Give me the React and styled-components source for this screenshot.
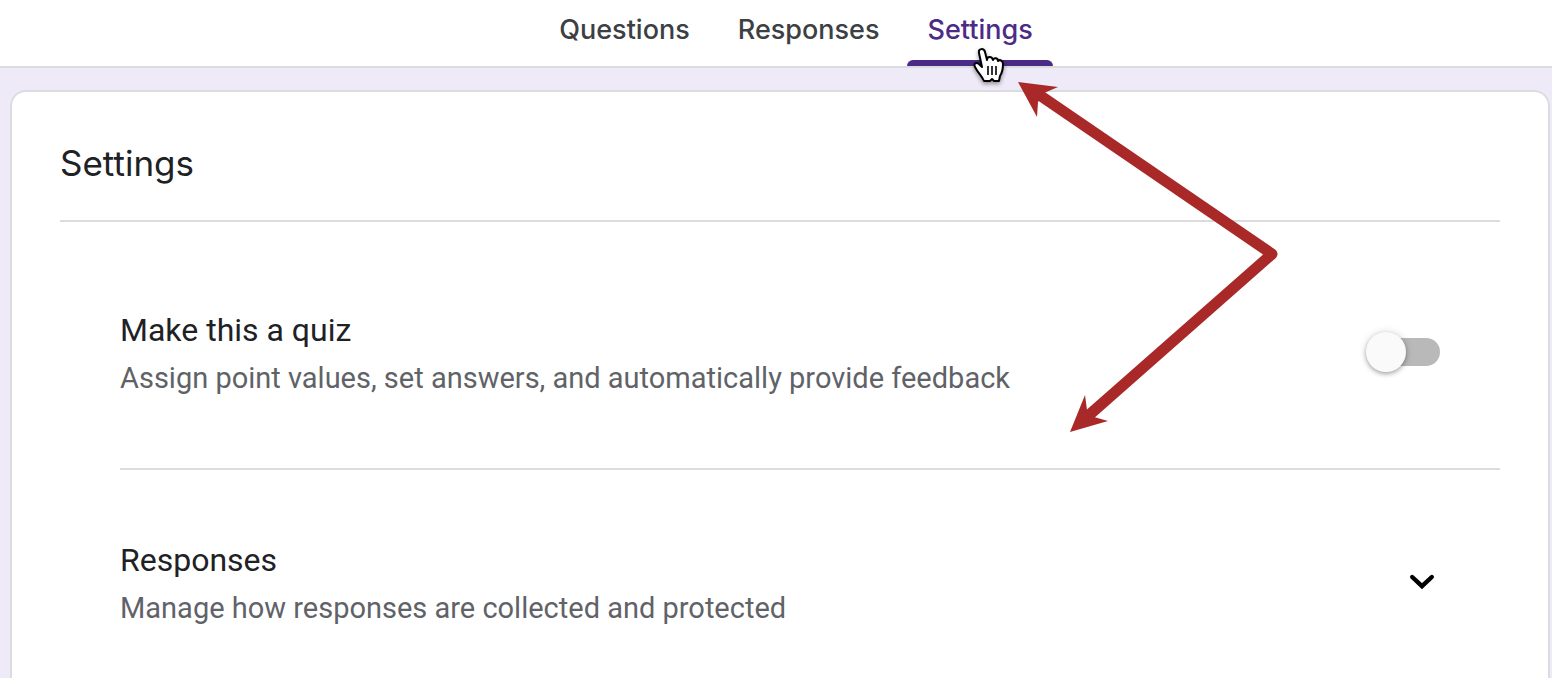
import styled, { createGlobalStyle } from "styled-components";

const GlobalStyle = createGlobalStyle`
  * {
    box-sizing: border-box;
  }

  body {
    margin: 0;
    background-color: #eeeaf7;
    font-family: Roboto, "Liberation Sans", sans-serif;
    color: #202124;
  }
`;

const displayFont = `Inter, "Liberation Sans", sans-serif`;

const Page = styled.div`
  position: relative;
  display: flex;
  flex-direction: column;
  min-height: 100vh;
  overflow: hidden;
`;

const Header = styled.header`
  padding-left: 40px;
  background-color: white;
  border-bottom: 2px solid #dadce0;
`;

const Tabs = styled.nav`
  display: flex;
  justify-content: center;
  gap: 8px;
`;

const Tab = styled.button`
  display: flex;
  flex-direction: column;
  padding: 0px;
  border: none;
  background: none;
  font-family: ${displayFont};
  font-size: 27px;
  font-weight: 500;
  line-height: 60px;
  color: ${(props) => (props.$active ? "#4c2b87" : "#3c4043")};
  cursor: pointer;

  &::after {
    content: "";
    width: 100%;
    height: 6px;
    border-radius: 6px 6px 0px 0px;
    background-color: ${(props) => (props.$active ? "#4c2b87" : "transparent")};
  }
`;

const TabLabel = styled.span`
  padding: 0px 20px;
`;

const Card = styled.main`
  flex: 1;
  margin: 22px 2px 0px 10px;
  padding: 48px 48px 0px;
  background-color: white;
  border: 2px solid #dadce0;
  border-bottom: none;
  border-radius: 16px 16px 0px 0px;
`;

const Title = styled.h1`
  margin: 0px;
  padding-bottom: 34px;
  border-bottom: 2px solid #dadce0;
  font-family: ${displayFont};
  font-size: 35px;
  font-weight: 400;
  line-height: 46px;
`;

const Section = styled.section`
  display: flex;
  align-items: center;
  justify-content: space-between;
  margin-left: 60px;
  padding: ${(props) => (props.$first ? "84px 60px 70px 0px" : "66px 60px 48px 0px")};
  border-bottom: ${(props) => (props.$first ? "2px solid #dadce0" : "none")};
`;

const Info = styled.div``;

const SectionTitle = styled.h2`
  display: block;
  margin: 0px;
  font-size: 32px;
  font-weight: 400;
  line-height: 48px;
`;

const Desc = styled.p`
  margin: 4px 0px 0px;
  font-size: 29px;
  line-height: 40px;
  color: #5f6368;
`;

const Switch = styled.input`
  appearance: none;
  display: flex;
  align-items: center;
  width: 72px;
  height: 28px;
  margin: 0px;
  border-radius: 14px;
  background-color: #b9b9b9;
  cursor: pointer;

  &::before {
    content: "";
    flex-shrink: 0;
    width: 40px;
    height: 40px;
    margin-left: -2px;
    border-radius: 50%;
    background-color: #fafafa;
    box-shadow: 0px 2px 4px rgba(0, 0, 0, 0.28), 0px 0px 8px rgba(0, 0, 0, 0.14);
  }

  &:checked {
    justify-content: flex-end;
    background-color: #a695c3;
  }
`;

const ExpandButton = styled.button`
  display: flex;
  margin-right: -6px;
  padding: 0px;
  border: none;
  background: none;
  cursor: pointer;
`;

const Arrows = styled.svg`
  position: absolute;
  top: 74px;
  left: 1010px;
  pointer-events: none;
`;

const Pointer = styled.svg`
  position: absolute;
  top: 44px;
  left: 968px;
  pointer-events: none;
  filter: drop-shadow(0px 2px 2px rgba(0, 0, 0, 0.4));
`;

const tabs = ["Questions", "Responses", "Settings"];

const App = () => {
  return (
    <Page>
      <GlobalStyle />
      <Header>
        <Tabs>
          {tabs.map((tab) => (
            <Tab key={tab} type="button" $active={tab === "Settings"}>
              <TabLabel>{tab}</TabLabel>
            </Tab>
          ))}
        </Tabs>
      </Header>
      <Card>
        <Title>Settings</Title>
        <Section $first>
          <Info>
            <SectionTitle as="label" htmlFor="quiz">
              Make this a quiz
            </SectionTitle>
            <Desc id="quiz-desc">
              Assign point values, set answers, and automatically provide
              feedback
            </Desc>
          </Info>
          <Switch
            id="quiz"
            type="checkbox"
            role="switch"
            aria-describedby="quiz-desc"
          />
        </Section>
        <Section>
          <Info>
            <SectionTitle>Responses</SectionTitle>
            <Desc>Manage how responses are collected and protected</Desc>
          </Info>
          <ExpandButton type="button" aria-label="Expand responses">
            <svg width="48" height="48" viewBox="0 0 48 48" fill="none">
              <path
                d="M14.2 19L24 28.2L33.8 19"
                stroke="black"
                strokeWidth="4.4"
                strokeLinecap="round"
              />
            </svg>
          </ExpandButton>
        </Section>
      </Card>
      <Arrows width="280" height="370" viewBox="0 0 280 370" aria-hidden="true">
        <path
          d="M28 20L262 180L78 342"
          fill="none"
          stroke="#a92929"
          strokeWidth="11"
          strokeLinejoin="round"
        />
        <path d="M8 8L48 13L34 19L28 28L27 43Z" fill="#a92929" />
        <path d="M60 358L75 321L77 336L84 343L98 347Z" fill="#a92929" />
      </Arrows>
      <Pointer width="42" height="44" viewBox="0 0 42 44" aria-hidden="true">
        <path
          d="M11 9C10 4 16 4 17 8L19 16C19 12 24 12 25 16C26 13 30 14 30 17C32 15 35 17 35 20C35 27 34 29 32 32L31 37H26L24 35L22 37H16C14 32 10 29 7 23C5 19 9 18 11 20L14 23Z"
          fill="white"
          stroke="black"
          strokeWidth="2"
          strokeLinejoin="round"
        />
        <path d="M20 22V31M24 22V31M28 22V31" stroke="black" strokeWidth="1.6" />
      </Pointer>
    </Page>
  );
};

export default App;
